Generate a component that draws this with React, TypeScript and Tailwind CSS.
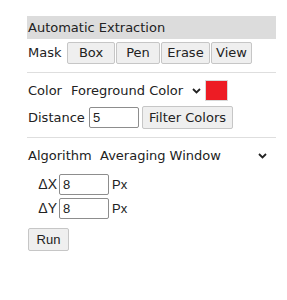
const Chevron = ({ className }: { className?: string }) => (
  <svg width="9" height="6" viewBox="0 0 9 6" className={className}>
    <path d="M1 1 L4.5 4.5 L8 1" fill="none" stroke="#222" strokeWidth="1.8" />
  </svg>
);

const maskButtons = [
  { label: "Box", width: "w-[48px]" },
  { label: "Pen", width: "w-[44px]" },
  { label: "Erase", width: "w-[49px]" },
  { label: "View", width: "w-[41px]" },
];

const App = () => {
  return (
    <div className="w-[287px] h-[300px] bg-white text-[13px] text-[#222] font-['DejaVu_Sans',sans-serif]">
      <div className="flex flex-col ml-[27px] w-[249px] pt-[16px]">
        <div className="h-[23px] bg-[#dcdcdc] flex items-center pl-[1px]">
          Automatic Extraction
        </div>

        <div className="mt-[3px] h-[22px] flex items-center pl-[1px]">
          <span className="w-[39px]">Mask</span>
          <div className="flex gap-px">
            {maskButtons.map((b) => (
              <button
                key={b.label}
                className={`${b.width} h-[22px] bg-[#efefef] border border-[#c6c6c6] rounded-[2px] flex items-center justify-center`}
              >
                {b.label}
              </button>
            ))}
          </div>
        </div>

        <div className="mt-[8px] h-px bg-[#dedede]" />

        <div className="mt-[7px] h-[21px] flex items-center pl-[1px]">
          <span className="w-[43px]">Color</span>
          <span>Foreground Color</span>
          <Chevron className="ml-[9px]" />
          <div className="ml-[4px] w-[23px] h-[21px] bg-[#ed1c24] border border-[#d8d8d8]" />
        </div>

        <div className="mt-[5px] h-[23px] flex items-center pl-[1px]">
          <span className="w-[61px]">Distance</span>
          <input
            defaultValue="5"
            className="w-[50px] h-[21px] border border-[#8d8d8d] rounded-[2px] px-[3px] font-['Liberation_Sans',sans-serif] text-[13px] outline-none"
          />
          <button className="ml-[3px] w-[91px] h-[23px] bg-[#efefef] border border-[#c6c6c6] rounded-[2px] flex items-center justify-center">
            Filter Colors
          </button>
        </div>

        <div className="mt-[8px] h-px bg-[#dedede]" />

        <div className="mt-[8px] h-[20px] flex items-center pl-[1px]">
          <span className="w-[72px]">Algorithm</span>
          <span className="flex-1">Averaging Window</span>
          <Chevron className="mr-[9px]" />
        </div>

        <div className="font-['Liberation_Sans',sans-serif] text-[13px]">
          {["ΔX", "ΔY"].map((axis, i) => (
            <div
              key={axis}
              className={`${i === 0 ? "mt-[8px]" : "mt-[3px]"} h-[21px] flex items-center`}
            >
              <span className="w-[32px] text-right pr-[2px] text-[14px]">{axis}</span>
              <input
                defaultValue="8"
                className="w-[50px] h-[21px] border border-[#8d8d8d] rounded-[2px] px-[3px] outline-none"
              />
              <span className="ml-[3px]">Px</span>
            </div>
          ))}

          <button className="mt-[9px] ml-[1px] w-[41px] h-[23px] bg-[#efefef] border border-[#c6c6c6] rounded-[2px] flex items-center justify-center">
            Run
          </button>
        </div>
      </div>
    </div>
  );
};

export default App;
